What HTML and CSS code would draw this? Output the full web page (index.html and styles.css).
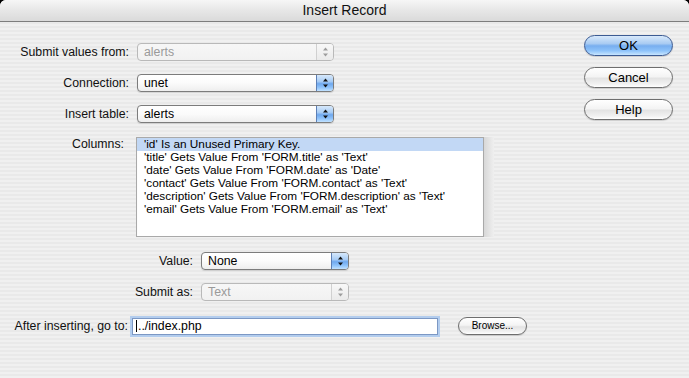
FILE: index.html
```html
<!DOCTYPE html>
<html>
<head>
<meta charset="utf-8">
<title>Insert Record</title>
<link rel="stylesheet" href="styles.css">
</head>
<body>
<div class="window">
  <div class="titlebar">Insert Record</div>
  <div class="content">
    <div class="form">
      <div class="grid-top">
        <label class="lbl">Submit values from:</label>
        <div class="select disabled"><span class="val">alerts</span><span class="stepper"><svg width="7" height="10" viewBox="0 0 7 10"><polygon points="3.5,0.5 6,3.5 1,3.5"/><polygon points="1,6.5 6,6.5 3.5,9.5"/></svg></span></div>
        <label class="lbl">Connection:</label>
        <div class="select"><span class="val">unet</span><span class="stepper"><svg width="7" height="10" viewBox="0 0 7 10"><polygon points="3.5,0.5 6,3.5 1,3.5"/><polygon points="1,6.5 6,6.5 3.5,9.5"/></svg></span></div>
        <label class="lbl">Insert table:</label>
        <div class="select"><span class="val">alerts</span><span class="stepper"><svg width="7" height="10" viewBox="0 0 7 10"><polygon points="3.5,0.5 6,3.5 1,3.5"/><polygon points="1,6.5 6,6.5 3.5,9.5"/></svg></span></div>
        <label class="lbl lbl-cols">Columns:</label>
        <div class="list-wrap">
          <ul class="list">
            <li class="sel">'id' Is an Unused Primary Key.</li>
            <li>'title' Gets Value From 'FORM.title' as 'Text'</li>
            <li>'date' Gets Value From 'FORM.date' as 'Date'</li>
            <li>'contact' Gets Value From 'FORM.contact' as 'Text'</li>
            <li>'description' Gets Value From 'FORM.description' as 'Text'</li>
            <li>'email' Gets Value From 'FORM.email' as 'Text'</li>
          </ul>
          <div class="list-shade"></div>
        </div>
      </div>
      <div class="grid-mid">
        <label class="lbl">Value:</label>
        <div class="select"><span class="val">None</span><span class="stepper"><svg width="7" height="10" viewBox="0 0 7 10"><polygon points="3.5,0.5 6,3.5 1,3.5"/><polygon points="1,6.5 6,6.5 3.5,9.5"/></svg></span></div>
        <label class="lbl">Submit as:</label>
        <div class="select disabled"><span class="val">Text</span><span class="stepper"><svg width="7" height="10" viewBox="0 0 7 10"><polygon points="3.5,0.5 6,3.5 1,3.5"/><polygon points="1,6.5 6,6.5 3.5,9.5"/></svg></span></div>
      </div>
      <div class="bottom-row">
        <label class="lbl lbl-after">After inserting, go to:</label>
        <div class="textfield"><span class="caret"></span>../index.php</div>
        <div class="btn btn-small">Browse...</div>
      </div>
    </div>
    <div class="buttons">
      <div class="btn btn-default">OK</div>
      <div class="btn">Cancel</div>
      <div class="btn">Help</div>
    </div>
  </div>
</div>
</body>
</html>
```
FILE: styles.css
```css
* { box-sizing: border-box; }
html, body { margin: 0; padding: 0; }
body {
  background: #000;
  font-family: "Liberation Sans", Arial, sans-serif;
  color: #000;
  width: 689px;
  height: 378px;
  overflow: hidden;
}
.window {
  width: 689px;
  height: 378px;
  border-radius: 6px 6px 0 0;
  overflow: hidden;
  background: repeating-linear-gradient(to bottom, #f0f0f0 0, #f0f0f0 2px, #e9e9e9 2px, #e9e9e9 4px);
}
.titlebar {
  height: 22px;
  line-height: 21px;
  text-align: center;
  font-size: 14px;
  color: #111;
  background: linear-gradient(to bottom, #f6f6f6 0%, #e8e8e8 45%, #dadada 100%);
  border-bottom: 1px solid #7d7d7d;
}
.content {
  display: flex;
  justify-content: space-between;
}
.form {
  padding-top: 21px;
}
.grid-top {
  display: grid;
  grid-template-columns: 129px 197px;
  column-gap: 8px;
  row-gap: 13px;
  align-items: center;
}
.lbl {
  font-size: 12.3px;
  text-align: right;
  white-space: nowrap;
  line-height: 14px;
  color: #111;
}
.lbl-cols {
  align-self: start;
  padding-right: 5px;
  padding-top: 1px;
}
.select {
  height: 18px;
  border: 1px solid #7c7c7c;
  border-radius: 4px;
  background: linear-gradient(to bottom, #ffffff 0%, #fbfbfb 50%, #eeeeee 100%);
  display: flex;
  align-items: center;
  justify-content: space-between;
  font-size: 12.3px;
  box-shadow: 0 1px 1px rgba(0,0,0,0.12);
}
.select .val {
  padding-left: 6px;
  line-height: 14px;
}
.stepper {
  width: 17px;
  height: 16px;
  border-left: 1px solid #5d7fb5;
  border-radius: 0 3px 3px 0;
  background: linear-gradient(to bottom, #d6e8fb 0%, #a9cdf5 40%, #6fa8ee 55%, #92c5fb 80%, #c2e2ff 100%);
  display: flex;
  align-items: center;
  justify-content: center;
}
.stepper svg { fill: #111; display: block; }
.select.disabled {
  border-color: #b9b9b9;
  color: #9a9a9a;
  box-shadow: none;
  background: linear-gradient(to bottom, #f7f7f7 0%, #f1f1f1 100%);
}
.select.disabled .stepper {
  border-left: 1px solid #d0d0d0;
  background: linear-gradient(to bottom, #f8f8f8, #eaeaea);
}
.select.disabled .stepper svg { fill: #9c9c9c; }
.list-wrap {
  display: flex;
  width: max-content;
  justify-self: start;
  margin-top: 1px;
  margin-left: -1px;
}
.list {
  flex: none;
  list-style: none;
  margin: 0;
  padding: 0;
  width: 348px;
  height: 100px;
  background: #fff;
  border: 1px solid #a9a9a9;
  box-shadow: inset 0 1px 1px rgba(0,0,0,0.08);
  font-size: 11.8px;
}
.list li {
  height: 13px;
  line-height: 13px;
  padding-left: 7px;
  white-space: nowrap;
}
.list li.sel { background: #c2d8f5; }
.list-shade {
  flex: none;
  width: 10px;
  height: 100px;
  background: linear-gradient(to right, #d8d8d8, #efefef);
}
.grid-mid {
  margin-top: 15px;
  display: grid;
  grid-template-columns: 193px 148px;
  column-gap: 8px;
  row-gap: 13px;
  align-items: center;
}
.bottom-row {
  margin-top: 16px;
  display: flex;
  align-items: center;
}
.lbl-after {
  width: 128px;
}
.textfield {
  margin-left: 4px;
  width: 306px;
  height: 17px;
  background: #fff;
  border: 1px solid #7c98c4;
  box-shadow: 0 0 0 2px #b3cdee;
  font-size: 12.3px;
  line-height: 15px;
  padding-left: 3px;
  display: flex;
  align-items: center;
}
.caret {
  display: inline-block;
  width: 1px;
  height: 12px;
  background: #000;
  margin-right: 1px;
}
.btn {
  width: 89px;
  height: 21px;
  border: 1px solid #6e6e6e;
  border-radius: 11px;
  background: linear-gradient(to bottom, #ffffff 0%, #f4f4f4 45%, #e3e3e3 55%, #f2f2f2 85%, #ffffff 100%);
  font-size: 13px;
  line-height: 19px;
  text-align: center;
  box-shadow: 0 1px 1px rgba(0,0,0,0.15);
}
.btn-default {
  border-color: #3c5b93;
  background: linear-gradient(to bottom, #d8e9fb 0%, #a9cbf2 40%, #78aeef 52%, #8ec3fa 78%, #c8e6ff 100%);
}
.btn-small {
  margin-left: 20px;
  width: 69px;
  height: 18px;
  border-radius: 9px;
  font-size: 10px;
  line-height: 16px;
}
.buttons {
  padding-top: 13px;
  margin-right: 16px;
  display: flex;
  flex-direction: column;
  gap: 11px;
}
```
